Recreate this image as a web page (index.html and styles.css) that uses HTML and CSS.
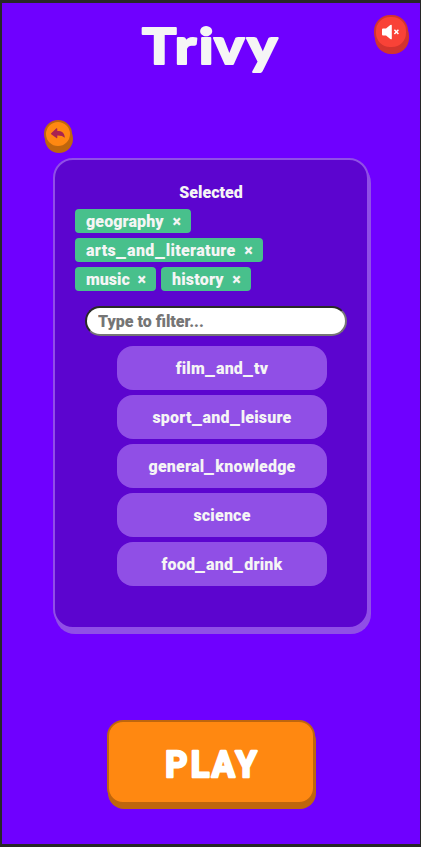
FILE: index.html
```
<!DOCTYPE html>
<html lang="en">
<head>
<meta charset="utf-8">
<title>Trivy</title>
<link rel="stylesheet" href="styles.css">
</head>
<body>
<main class="app">
  <header class="header">
    <h1 class="title"><svg width="150" height="80" viewBox="0 0 150 80"><text transform="scale(1.12 .97)" x="1.7 31 52.5 66 95.5" y="57">Trivy</text></svg></h1>
    <button class="round mute" aria-label="Mute">
      <svg width="20" height="18" viewBox="0 0 20 18"><path d="M1 6.5Q1 5.5 2 5.5H5L9.3 2.1Q10.8 1 10.8 2.6V15.4Q10.8 17 9.3 15.9L5 12.5H2Q1 12.5 1 11.5Z" fill="#fff"/><path d="M13.4 6.8L17.4 11M17.4 6.8L13.4 11" stroke="#fff" stroke-width="1.5"/></svg>
    </button>
  </header>
  <button class="round back" aria-label="Back">
    <svg width="16" height="14" viewBox="0 0 16 14"><path d="M1.2 6.2L6.4 1.3Q7.3 .8 7.3 2V4.1C12 4.1 14.6 6 14.8 10.8Q12.3 8.2 7.3 8.4V10.6Q7.3 11.7 6.4 11.1L1.2 7.2Q.6 6.7 1.2 6.2Z" fill="#a82350"/></svg>
  </button>
  <section class="panel">
    <h2 class="label">Selected</h2>
    <div class="tags">
      <span class="tag geography"><span>geography</span><b>×</b></span>
      <span class="tag arts"><span>arts<i>_</i>and<i>_</i>literature</span><b>×</b></span>
      <span class="tag music"><span>music</span><b>×</b></span>
      <span class="tag history"><span>history</span><b>×</b></span>
    </div>
    <input class="filter" placeholder="Type to filter...">
    <div class="options">
      <button class="option">film<i>_</i>and<i>_</i>tv</button>
      <button class="option">sport<i>_</i>and<i>_</i>leisure</button>
      <button class="option">general<i>_</i>knowledge</button>
      <button class="option">science</button>
      <button class="option">food<i>_</i>and<i>_</i>drink</button>
    </div>
  </section>
  <button class="play"><svg width="110" height="50" viewBox="0 0 110 50"><text transform="scale(.93 1)" x="10 37.5 60 85.5" y="38">PLAY</text></svg></button>
</main>
</body>
</html>
```
FILE: styles.css
```
* { box-sizing: border-box; }
body {
  margin: 0;
  height: 847px;
  padding: 3px 1px 3px 2px;
  overflow: hidden;
  background: #272727;
  font: 900 16px/20px Roboto, sans-serif;
  color: #f5f5f5;
}
button, input { font: inherit; color: inherit; padding: 0; margin: 0; }
svg { display: block; flex: none; overflow: visible; }
i {
  display: inline-block;
  width: 11px;
  font-style: normal;
  text-align: left;
  transform: translateY(1px) scaleX(1.4);
  transform-origin: left;
}
.app { height: 841px; background: #6f00ff; display: flex; flex-direction: column; }
.header { height: 117px; display: flex; position: relative; }
.title { margin: 6px 0 0 138px; height: 80px; }
.title text {
  font: 900 51px Lato, sans-serif;
  fill: #f5f5f5;
  stroke: #f5f5f5;
  stroke-width: 2px;
  stroke-linejoin: round;
}
.round {
  display: flex;
  align-items: center;
  justify-content: center;
  border: 2px solid;
  flex: none;
}
.mute {
  position: absolute;
  top: 12px;
  right: 12px;
  width: 34px;
  height: 34px;
  border-radius: 16px;
  background: #f94237;
  border-color: #d3342e;
  box-shadow: 1px 5px #d3342e;
}
.back {
  width: 28px;
  height: 28px;
  margin-left: 42px;
  border-radius: 50%;
  background: #ff8811;
  border-color: #bf660d;
  box-shadow: 1px 5px #bf660d;
}
.panel {
  width: 316px;
  height: 471px;
  flex: none;
  margin: 10px 0 0 51px;
  padding: 23px 20px 0;
  background: #5c05cf;
  border: 2px solid #904fe6;
  border-radius: 20px;
  box-shadow: 2px 5px #904fe6;
}
.label { margin: 0; font-size: 16px; font-weight: 900; line-height: 20px; text-align: center; }
.tags { display: flex; flex-wrap: wrap; gap: 5px; width: 200px; margin-top: 6px; }
.tag {
  display: flex;
  justify-content: space-between;
  height: 24px;
  padding: 1px 10px 0 11px;
  border-radius: 4px;
  background: #48c08c;
  line-height: 24px;
  white-space: nowrap;
}
.tag b { font-weight: 900; }
.geography { width: 116px; letter-spacing: .1px; }
.arts { width: 188px; letter-spacing: .35px; }
.music { width: 81px; }
.history { width: 90px; letter-spacing: .2px; }
.filter {
  display: block;
  width: 262px;
  height: 30px;
  margin: 15px 0 0 10px;
  padding: 0 11px;
  border: 2px solid;
  border-color: #292929 #767676 #767676 #292929;
  border-radius: 15px;
  background: #fff;
}
.filter::placeholder { color: #757575; }
.options { display: flex; flex-direction: column; gap: 5px; width: 210px; margin: 10px 0 0 42px; }
.option { height: 44px; padding-top: 2px; border: 0; border-radius: 16px; background: #904fe6; letter-spacing: .2px; }
.play {
  display: flex;
  align-items: center;
  justify-content: center;
  width: 208px;
  height: 84px;
  margin: 91px 0 0 105px;
  padding-top: 4px;
  border: 2px solid #bf660d;
  border-radius: 16px;
  background: #ff8811;
  box-shadow: 1px 5px #bf660d;
}
.play text {
  font: 700 37px Roboto, sans-serif;
  fill: #fff;
  stroke: #fff;
  stroke-width: 2.5px;
  stroke-linejoin: round;
}
```
